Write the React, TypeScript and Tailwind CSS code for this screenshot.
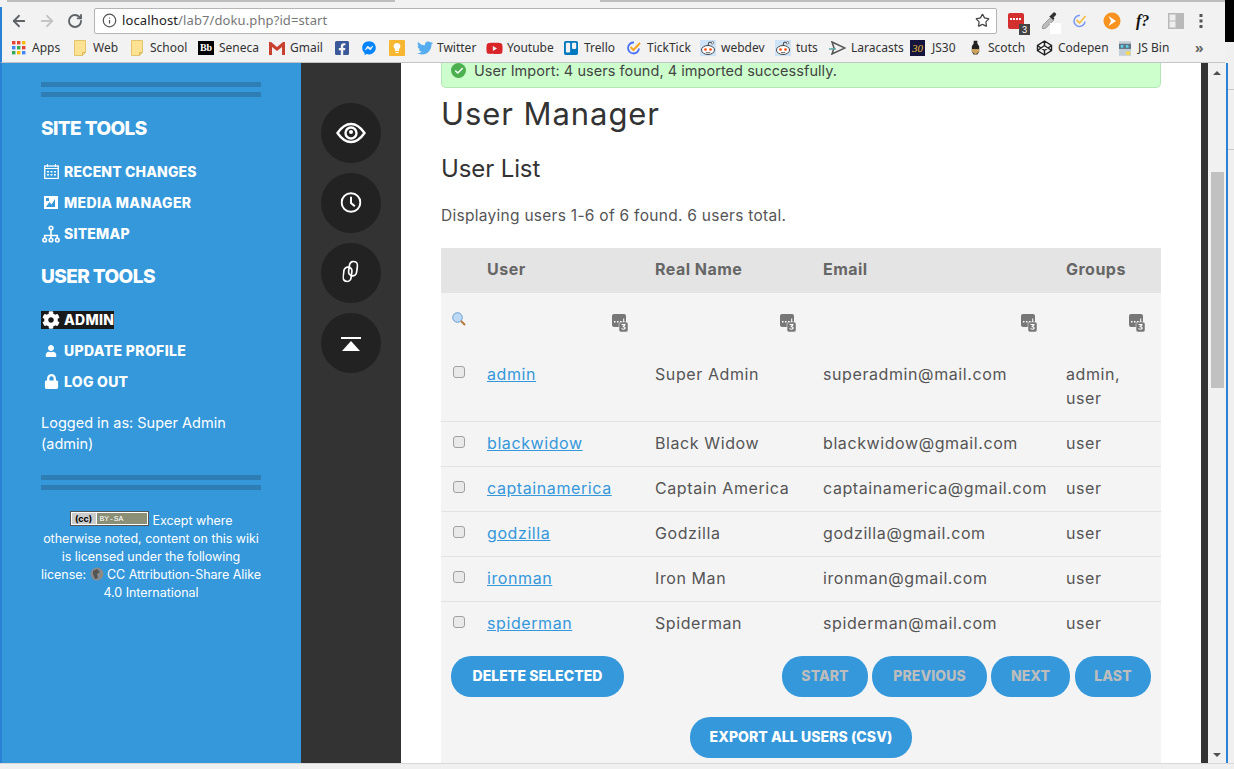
import React from "react";
import { FaCog, FaLock, FaUser, FaFacebookSquare, FaTwitter, FaYoutube, FaTrello, FaFacebookMessenger } from "react-icons/fa";
import { ArrowLeft, ArrowRight, RotateCw, Info, Star, Check } from "lucide-react";

const Folder = () => (
  <svg width="12" height="16" viewBox="0 0 12 16" className="shrink-0">
    <path d="M.5.5h11v12l-3 3H.500z" fill="#fde293" stroke="#e3c46a" />
    <path d="M8.500 15.500v-3h3" fill="none" stroke="#d8b85a" />
  </svg>
);

const Apps = () => (
  <svg width="14" height="14" viewBox="0 0 14 14" className="shrink-0">
    {[0, 5, 10].map((y, r) =>
      [0, 5, 10].map((x, c) => (
        <rect key={`${r}${c}`} x={x} y={y} width="3.400" height="3.400" fill={[["#e94235", "#e94235", "#fbbc05"], ["#4285f4", "#34a853", "#e94235"], ["#34a853", "#fbbc05", "#4285f4"]][r][c]} />
      ))
    )}
  </svg>
);

const Reddit = () => (
  <svg width="16" height="16" viewBox="0 0 16 16" className="shrink-0">
    <rect width="16" height="16" fill="#cee3f8" />
    <ellipse cx="8" cy="10" rx="6.500" ry="4.500" fill="#fff" stroke="#444" />
    <circle cx="5.500" cy="9.500" r="1.300" fill="#ff4500" />
    <circle cx="10.500" cy="9.500" r="1.300" fill="#ff4500" />
    <path d="M8 5.500L9 2l3 .7" fill="none" stroke="#444" />
    <circle cx="12.500" cy="2.700" r="1.200" fill="#fff" stroke="#444" strokeWidth=".7" />
    <path d="M5.800 12.200q2.200 1.200 4.400 0" fill="none" stroke="#444" strokeWidth=".8" />
  </svg>
);

const bookmarks = [
  { w: "w-[62px] gap-[6px]", label: "Apps", icon: <Apps /> },
  { w: "w-[57px] gap-[7px]", label: "Web", icon: <Folder /> },
  { w: "w-[67px] gap-[7px]", label: "School", icon: <Folder /> },
  { w: "w-[71px] gap-[5px]", label: "Seneca", icon: <span className="flex h-[14px] w-[16px] shrink-0 items-center justify-center bg-black font-['Liberation_Serif',serif] text-[10px] font-bold leading-none text-white">Bb</span> },
  { w: "w-[65px] gap-[5px]", label: "Gmail", icon: <svg width="16" height="13" viewBox="0 0 16 13" className="shrink-0"><path d="M0 0h2l6 5 6-5h2v13h-3V5L8 9 3 5v8H0z" fill="#c8402f" /></svg> },
  { w: "w-[28px]", label: "", icon: <FaFacebookSquare size={16} color="#3b5998" /> },
  { w: "w-[27px]", label: "", icon: <FaFacebookMessenger size={14} color="#0084ff" /> },
  { w: "w-[28px]", label: "", icon: <svg width="16" height="16" viewBox="0 0 16 16"><rect width="16" height="16" rx="1" fill="#f7b731" /><path d="M8 3a3.400 3.400 0 0 0-2 6.200V11h4V9.200A3.400 3.400 0 0 0 8 3zM6.500 12h3v1h-3z" fill="#fff" /></svg> },
  { w: "w-[69px] gap-[4px]", label: "Twitter", icon: <FaTwitter size={16} color="#55acee" /> },
  { w: "w-[77px] gap-[4px]", label: "Youtube", icon: <FaYoutube size={17} color="#d9252a" /> },
  { w: "w-[63px] gap-[5px]", label: "Trello", icon: <FaTrello size={16} color="#0079bf" /> },
  { w: "w-[74px] gap-[5px]", label: "TickTick", icon: <svg width="16" height="16" viewBox="0 0 16 16" className="shrink-0"><path d="M13 8.500A5.500 5.500 0 1 1 8 2.500" fill="none" stroke="#4772fa" strokeWidth="1.800" /><path d="M4.500 7l3 3 6.500-7" fill="none" stroke="#f5a623" strokeWidth="2" /></svg> },
  { w: "w-[75px] gap-[5px]", label: "webdev", icon: <Reddit /> },
  { w: "w-[54px] gap-[5px]", label: "tuts", icon: <Reddit /> },
  { w: "w-[81px] gap-[5px]", label: "Laracasts", icon: <svg width="17" height="14" viewBox="0 0 17 14" className="shrink-0"><path d="M3 1l13 6-13 6 2-6z" fill="none" stroke="#555" strokeWidth="1.500" /><path d="M0 8h7" stroke="#5ba7a5" strokeWidth="1.500" /></svg> },
  { w: "w-[60px] gap-[7px]", label: "JS30", icon: <span className="flex h-[16px] w-[15px] shrink-0 items-center justify-center bg-[#14143c] font-['Liberation_Serif',serif] text-[11px] italic leading-none text-[#e8b93a]">30</span> },
  { w: "w-[66px] gap-[7px]", label: "Scotch", icon: <svg width="11" height="17" viewBox="0 0 12 17" className="shrink-0"><path d="M4 0h4v3l2 3v6l-2 3H4l-2-3V6l2-3z" fill="#222" /><path d="M2 9h8v3l-4 3-4-3z" fill="#c9a15a" /></svg> },
  { w: "w-[83px] gap-[5px]", label: "Codepen", icon: <svg width="17" height="16" viewBox="0 0 16 16" className="shrink-0" fill="none" stroke="#222" strokeWidth="1.400"><path d="M8 1l7 4.500v5L8 15l-7-4.500v-5zM8 1v4.500M8 10.500V15M1 5.500l7 5 7-5M1 10.500l7-5 7 5" /></svg> },
  { w: "w-[76px] gap-[7px]", label: "JS Bin", icon: <svg width="12" height="17" viewBox="0 0 14 17" className="shrink-0"><rect width="14" height="17" fill="#c3ced6" /><rect y="3" width="14" height="6" fill="#5f7382" /><rect x="2" y="4.500" width="3" height="3" fill="#5fd5f0" /><rect x="8" y="4.500" width="3" height="3" fill="#5fd5f0" /><rect x="8" y="12" width="5" height="4" fill="#f5d94e" /></svg> },
];

const Rules = () => (
  <div className="flex w-[220px] flex-col gap-[5px]">
    <div className="h-[5px] bg-[#2e7db5]" />
    <div className="h-[5px] bg-[#2e7db5]" />
  </div>
);

const NavItem = ({ icon, label, track, active }: { icon: React.ReactNode; label: string; track: string; active?: boolean }) => (
  <div className="flex h-[31px] items-center">
    <div className={`flex h-[18px] items-center ${active ? "bg-[#1a1a1a]" : ""}`}>
      <span className="mr-[3px] flex w-[20px] justify-center">{icon}</span>
      <span className={`text-[14px] font-extrabold uppercase leading-none text-white ${track}`}>{label}</span>
    </div>
  </div>
);

const Round = ({ children }: { children: React.ReactNode }) => (
  <div className="flex h-[60px] w-[60px] items-center justify-center rounded-full bg-[#222]">{children}</div>
);

const Stack = () => (
  <svg width="16" height="18" viewBox="0 0 16 18">
    <rect x="0" y="0" width="14" height="13" rx="2" fill="#777" />
    <path d="M2 7h1.500v1.500H2zM5 7h1.500v1.500H5zM8 7h1.500v1.500H8zM11.200 4.500h1V8.500h-1z" fill="#fff" />
    <rect x="7" y="8" width="9" height="10" rx="2" fill="#777" stroke="#f4f4f4" strokeWidth="0.500" />
    <path d="M9.500 10h4v1.200l-1.600 1.300c1.200 0 1.800.6 1.800 1.500 0 1.100-.9 1.700-2.100 1.700-.8 0-1.600-.2-2.200-.6v-1c.6.4 1.400.6 2 .6.6 0 1-.2 1-.7s-.4-.7-1.300-.7h-.6v-1l1.400-1.200H9.500z" fill="#fff" />
  </svg>
);

const users = [
  ["admin", "Super Admin", "superadmin@mail.com", "admin, user"],
  ["blackwidow", "Black Widow", "blackwidow@gmail.com", "user"],
  ["captainamerica", "Captain America", "captainamerica@gmail.com", "user"],
  ["godzilla", "Godzilla", "godzilla@gmail.com", "user"],
  ["ironman", "Iron Man", "ironman@gmail.com", "user"],
  ["spiderman", "Spiderman", "spiderman@mail.com", "user"],
];

const Btn = ({ w, children, off }: { w: string; children: React.ReactNode; off?: boolean }) => (
  <div className={`flex h-[41px] items-center justify-center rounded-[20px] bg-[#3498db] pb-[1px] text-[14px] font-extrabold uppercase leading-none tracking-[0.005em] ${w} ${off ? "text-[#bdbdbd]" : "text-white"}`}>
    {children}
  </div>
);

const cols = "grid grid-cols-[46px_168px_168px_243px_95px]";

export default function App() {
  return (
    <div className="relative flex h-[769px] w-[1234px] flex-col overflow-hidden bg-[#f0f0f0] font-['Inter',sans-serif]">
      {/* behind-window corner */}
      <div className="absolute right-0 top-0 h-[42px] w-[9px] bg-black" />
      {/* tab strip */}
      <div className="flex h-[7px] w-[1225px] shrink-0 bg-[#f2f2f2]">
        <div className="ml-[7px] h-[2px] w-[205px] bg-[#bdbdbd]" />
        <div className="h-[2px] w-[183px] bg-[#bdbdbd]" />
        <div className="ml-[205px] h-[2px] w-[625px] bg-[#bdbdbd]" />
      </div>
      {/* toolbar */}
      <div className="flex h-[27px] w-[1225px] shrink-0 items-center border-l-2 border-[#2a82d7] bg-[#f2f2f2]">
        <div className="flex w-[92px] items-center pl-[8px] text-[#5f6368]">
          <ArrowLeft size={18} strokeWidth={2.400} />
          <ArrowRight size={18} strokeWidth={2.400} className="ml-[10px] text-[#c4c4c4]" />
          <RotateCw size={16} strokeWidth={2.800} className="ml-[11px]" />
        </div>
        <div className="flex h-[26px] w-[903px] items-center rounded-[2px] border border-[#b5b5b5] bg-white pl-[7px] pr-[6px] font-['Noto_Sans',sans-serif] text-[13px]">
          <Info size={15} strokeWidth={2} className="text-[#555]" />
          <span className="ml-[5px] tracking-[0.01em] text-[#222]">localhost</span>
          <span className="tracking-[0.008em] text-[#777]">/lab7/doku.php?id=start</span>
          <Star size={15} strokeWidth={2} className="ml-auto text-[#444]" />
        </div>
        <div className="relative ml-[11px] h-[16px] w-[16px] rounded-[2px] bg-[#d32f2f]">
          <span className="absolute left-[2px] top-[5px] flex gap-[1px]">
            <i className="h-[2px] w-[2px] bg-white" />
            <i className="h-[2px] w-[2px] bg-white" />
            <i className="h-[2px] w-[2px] bg-white" />
            <i className="h-[2px] w-[2px] bg-white" />
          </span>
          <span className="absolute left-[11px] top-[11px] flex h-[11px] w-[11px] items-center justify-center bg-[#444] text-[9px] leading-none text-white">3</span>
        </div>
        <span className="relative ml-[16px] h-[18px] w-[18px]">
          <svg width="18" height="18" viewBox="0 0 18 18"><path d="M11 5l3 3-8 8-3 1-1-1 1-3z" fill="#bbb" stroke="#888" strokeWidth=".7" /><path d="M10 4l1-1 2.500-2.500c1-1 3.500 1.500 2.500 2.500L13.500 5.500l1 1-1.500 1.500-4-4z" fill="#333" /></svg>
          <span className="absolute left-[10px] top-[11px] h-[11px] w-[11px] bg-white" />
        </span>
        <svg width="16" height="16" viewBox="0 0 16 16" className="ml-[14px]"><path d="M13 8.500A5.500 5.500 0 1 1 8 2.500" fill="none" stroke="#7d9bf0" strokeWidth="1.600" /><path d="M4.500 7l3 3 6-7" fill="none" stroke="#f5c04a" strokeWidth="1.800" /></svg>
        <svg width="18" height="18" viewBox="0 0 18 18" className="ml-[15px]"><circle cx="9" cy="9" r="8.500" fill="#f7931e" /><path d="M5.500 4l7.500 5-7.500 5 2.500-5z" fill="#fff" /></svg>
        <span className="ml-[15px] w-[18px] font-['Liberation_Serif',serif] text-[16px] font-bold italic leading-none text-[#111]">f?</span>
        <svg width="16" height="16" viewBox="0 0 16 16" className="ml-[14px]"><rect width="16" height="16" fill="#b9b9b9" /><rect x="1.500" y="1.500" width="6" height="6" fill="#eee" /><rect x="1.500" y="8.500" width="6" height="6" fill="#eee" /></svg>
        <svg width="4" height="14" viewBox="0 0 4 14" className="ml-[15px]" fill="#555"><rect x=".5" width="3" height="3" /><rect x=".5" y="5.500" width="3" height="3" /><rect x=".5" y="11" width="3" height="3" /></svg>
      </div>
      {/* bookmarks */}
      <div className="flex h-[29px] w-[1225px] shrink-0 items-center border-b border-l-2 border-b-[#c4c4c4] border-l-[#2a82d7] bg-[#f2f2f2] pl-[10px] font-['Noto_Sans',sans-serif] text-[12px] text-[#333]">
        {bookmarks.map((b, i) => (
          <div key={i} className={`flex shrink-0 items-center ${b.w}`}>
            {b.icon}
            {b.label && <span className="leading-none">{b.label}</span>}
          </div>
        ))}
        <span className="text-[14px] font-bold leading-none text-[#666]">»</span>
      </div>

      {/* page */}
      <div className="flex h-[700px] shrink-0 items-start">
        <div className="flex h-full w-[1226px] overflow-hidden">
          {/* sidebar */}
          <aside className="flex h-full w-[301px] shrink-0 flex-col border-l-2 border-[#2a82d7] bg-[#3498db] pl-[39px] text-white">
            <div className="mt-[19px]"><Rules /></div>
            <h3 className="mt-[22px] text-[19px] font-extrabold uppercase leading-[20px] tracking-[-0.03em]">Site Tools</h3>
            <div className="mt-[17px] flex flex-col">
              <NavItem track="tracking-[0.01em]" label="Recent Changes" icon={<svg width="15" height="15" viewBox="0 0 15 15"><rect x=".75" y="2" width="13.500" height="12.500" fill="none" stroke="#fff" strokeWidth="1.300" /><path d="M3.500 0v3M11.500 0v3M1 4.500h13" stroke="#fff" /><path d="M3 7h2v1.500H3zM6.500 7h2v1.500h-2zM10 7h2v1.500h-2zM3 10h2v1.500H3zM6.500 10h2v1.500h-2zM10 10h2v1.500h-2z" fill="#fff" /></svg>} />
              <NavItem track="tracking-[0.025em]" label="Media Manager" icon={<svg width="14" height="13" viewBox="0 0 14 13"><path d="M0 0h14v13H0z" fill="#fff" /><path d="M2 11l3.500-5 2 2.500L11 3v8z" fill="#3498db" /><rect x="2" y="2" width="3" height="3" fill="#3498db" /></svg>} />
              <NavItem track="tracking-[0.015em]" label="Sitemap" icon={<svg width="18" height="18" viewBox="0 0 18 18" fill="none" stroke="#fff" strokeWidth="1.600"><circle cx="9" cy="3" r="1.800" /><circle cx="2.700" cy="15" r="1.800" /><circle cx="9" cy="15" r="1.800" /><circle cx="15.300" cy="15" r="1.800" /><path d="M9 5v8M2.700 13v-2.500h12.600V13" /></svg>} />
            </div>
            <h3 className="mt-[18px] text-[19px] font-extrabold uppercase leading-[20px] tracking-[-0.03em]">User Tools</h3>
            <div className="mt-[17px] flex flex-col">
              <div className="w-fit"><NavItem active track="tracking-[0.02em]" label="Admin" icon={<FaCog size={18} color="#fff" />} /></div>
              <NavItem track="tracking-[0.025em]" label="Update Profile" icon={<FaUser size={12} color="#fff" />} />
              <NavItem track="tracking-[0.02em]" label="Log Out" icon={<FaLock size={15} color="#fff" />} />
            </div>
            <p className="mt-[15px] w-[220px] text-[14.500px] leading-[21px]">Logged in as: Super Admin (admin)</p>
            <div className="mt-[21px]"><Rules /></div>
            <div className="mt-[21px] w-[220px] whitespace-nowrap text-center text-[12.500px] leading-[18px] tracking-[-0.003em]">
              <span className="mr-[4px] inline-flex h-[15px] w-[79px] items-stretch border border-[#555] bg-white p-[1px] align-[3px]">
                <span className="flex w-[24px] items-center justify-center bg-[#ccc] text-[9px] font-bold leading-none text-black">(cc)</span>
                <span className="ml-[1px] flex flex-1 items-center bg-[#8a8f75] pl-[3px] font-['Liberation_Mono',monospace] text-[8px] leading-none text-white">BY-SA</span>
              </span>
              Except where<br />otherwise noted, content on this wiki<br />is licensed under the following<br />license:{" "}
              <svg width="14" height="14" viewBox="0 0 14 14" className="inline align-[-2px]"><circle cx="7" cy="7" r="6.500" fill="#8a8a8a" /><path d="M3 4l4-2 3 3-3 2 1 4-3 1-2-5z" fill="#555" /></svg>{" "}
              CC Attribution-Share Alike<br />4.0 International
            </div>
          </aside>
          {/* tools strip */}
          <div className="flex h-full w-[100px] shrink-0 flex-col items-center gap-[10px] bg-[#333] pt-[40px]">
            <Round>
              <svg width="30" height="22" viewBox="0 0 30 22" fill="none" stroke="#fff" strokeWidth="2.400"><path d="M1.500 11C6 4.500 10.500 2 15 2s9 2.500 13.500 9C24 17.500 19.500 20 15 20S6 17.500 1.500 11z" /><circle cx="15" cy="11" r="5.500" /><circle cx="15" cy="10" r="2" fill="#fff" stroke="none" /></svg>
            </Round>
            <Round>
              <svg width="21" height="21" viewBox="0 0 22 22" fill="none" stroke="#fff" strokeWidth="2.100" className="-translate-x-[0.5px] -translate-y-[1px]"><circle cx="11" cy="11" r="9.800" /><path d="M11 5v6.500l4 3.500" /></svg>
            </Round>
            <Round>
              <svg width="16" height="22" viewBox="0 0 16 22" fill="none" stroke="#fff" strokeWidth="1.700" className="-translate-x-[0.5px] -translate-y-[1.500px]">
                <rect x="1" y="6.500" width="8" height="14.500" rx="4" transform="rotate(8 5 13.500)" />
                <rect x="6.500" y="1" width="8" height="14.500" rx="4" transform="rotate(8 11 8.500)" />
              </svg>
            </Round>
            <Round>
              <svg width="20" height="14" viewBox="0 0 20 14" className="translate-y-[1px]"><rect width="20" height="2" fill="#fff" /><path d="M10 4l9 10H1z" fill="#fff" /></svg>
            </Round>
          </div>
          {/* main */}
          <main className="h-full w-[800px] shrink-0 bg-white px-[40px] text-[#555]">
            <div className="flex h-[25px] w-[720px] items-start rounded-b-[5px] border border-t-0 border-[#b5e6b5] bg-[#ccffcc] pl-[9px] text-[14.500px] leading-none">
              <span className="flex h-[15px] w-[15px] items-center justify-center rounded-full bg-[#4caf50]"><Check size={10} strokeWidth={3.500} color="#fff" /></span>
              <span className="ml-[8px] mt-[1px] tracking-[0.003em] text-[#444]">User Import: 4 users found, 4 imported successfully.</span>
            </div>
            <h1 className="mt-[9px] text-[31px] font-normal leading-[34px] tracking-[0.03em] text-[#333]">User Manager</h1>
            <h2 className="mt-[23px] text-[24px] font-normal leading-[30px] tracking-[-0.005em] text-[#333]">User List</h2>
            <p className="mt-[22px] text-[15.500px] leading-[20px] tracking-[0.018em]">Displaying users 1-6 of 6 found. 6 users total.</p>
            <div className="mt-[22px] h-[515px] w-[720px] bg-[#f4f4f4] text-[16px]">
              <div className={`${cols} h-[45px] items-start bg-[#e4e4e4] pt-[9px] font-bold leading-[24px] tracking-[0.03em] text-[#666]`}>
                <span /><span>User</span><span>Real Name</span><span>Email</span><span>Groups</span>
              </div>
              <div className={`${cols} h-[59px]`}>
                <svg width="14" height="14" viewBox="0 0 14 14" className="ml-[11px] mt-[19px]"><circle cx="5.500" cy="5.500" r="4.800" fill="#bcd9f5" stroke="#6e9ed0" /><path d="M9 9l4 4" stroke="#b5783a" strokeWidth="2" /></svg>
                <span className="ml-[125px] mt-[21px]"><Stack /></span>
                <span className="ml-[125px] mt-[21px]"><Stack /></span>
                <span className="ml-[198px] mt-[21px]"><Stack /></span>
                <span className="ml-[63px] mt-[21px]"><Stack /></span>
              </div>
              {users.map((u, i) => (
                <div key={u[0]} className={`${cols} ${i === 0 ? "h-[69px] pt-[10px]" : "h-[45px] items-center border-t border-[#e2e2e2] pb-[2px]"} leading-[24px] tracking-[0.037em]`}>
                  <span className={`ml-[12px] block h-[12px] w-[12px] rounded-[3px] border border-[#a0a0a0] bg-[#e9e9e9] ${i === 0 ? "mt-[4px]" : "mb-[2px]"}`} />
                  <a className="w-fit text-[#3498db] underline">{u[0]}</a>
                  <span>{u[1]}</span>
                  <span className="whitespace-nowrap">{u[2]}</span>
                  <span className="w-[60px]">{u[3]}</span>
                </div>
              ))}
              <div className="mt-[10px] flex items-center px-[10px]">
                <Btn w="w-[173px]">Delete Selected</Btn>
                <div className="ml-auto flex gap-[4px]">
                  <Btn off w="w-[86px]">Start</Btn>
                  <Btn off w="w-[115px]">Previous</Btn>
                  <Btn off w="w-[79px]">Next</Btn>
                  <Btn off w="ml-[1px] w-[76px]">Last</Btn>
                </div>
              </div>
              <div className="mt-[20px] flex justify-center"><Btn w="w-[222px]">Export All Users (CSV)</Btn></div>
            </div>
          </main>
          {/* right dark strip and scrollbar */}
          <div className="h-full w-[7px] shrink-0 bg-[#333]" />
          <div className="flex h-full w-[18px] shrink-0 flex-col items-center bg-[#f1f1f1]">
            <span className="mt-[8px] h-0 w-0 border-x-[4px] border-b-[4px] border-x-transparent border-b-[#505050]" />
            <div className="mt-[97px] h-[216px] w-[13px] bg-[#c1c1c1]" />
            <span className="mb-[6px] mt-auto h-0 w-0 border-x-[4px] border-t-[4px] border-x-transparent border-t-[#505050]" />
          </div>
        </div>
        <div className="flex h-full w-[8px] shrink-0 flex-col border-l-2 border-[#2a82d7] bg-[#f0f0f0]">
          <div className="mt-[26px] h-[61px] border-y border-[#c9c9c9]" />
        </div>
      </div>
      <div className="flex-1 border-t border-[#d8d8d8] bg-[#f0f0f0]" />
    </div>
  );
}
